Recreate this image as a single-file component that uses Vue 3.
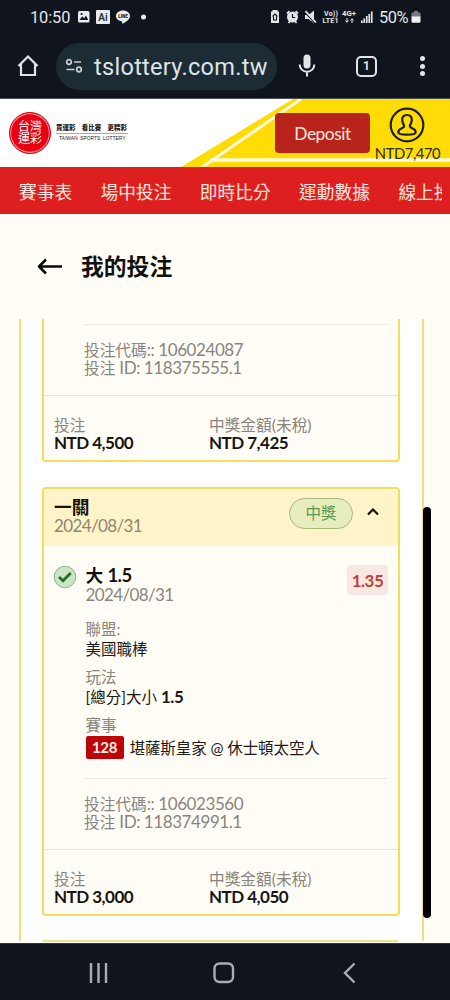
<script setup>
const tabs = ['賽事表', '場中投注', '即時比分', '運動數據', '線上投注']
const details = [
  { label: '聯盟:', value: '美國職棒' },
  { label: '玩法', value: '[總分]大小', bold: '1.5' },
]
</script>

<template>
  <div class="screen">
    <header class="status">
      <span class="clock">10:50</span>
      <svg class="notes" width="80" height="20" viewBox="0 0 80 20">
        <rect x="1" y="4" width="11.500" height="11.500" rx="1.6" fill="#e9ecef" />
        <path d="M2.500 13 5.300 9.300 7.100 11.200 9 8.600 11.200 13Z" fill="#10141c" /><circle cx="4.600" cy="7" r="1.100" fill="#10141c" />
        <rect x="19" y="3" width="14" height="14" rx="1" fill="#e9ecef" />
        <text x="26" y="13.500" text-anchor="middle" font-size="10" font-weight="700" font-family="Roboto, sans-serif" fill="#333941">Ai</text>
        <path d="M46 3.500c-4 0-7 2.400-7 5.500 0 2.800 2.500 4.900 5.700 5.300l.8 2.400c2.600-1.200 7.500-4 7.500-7.700 0-3.100-3-5.500-7-5.500Z" fill="#e9ecef" />
        <text x="46" y="10.800" text-anchor="middle" font-size="4.600" font-weight="900" font-family="Roboto, sans-serif" fill="#20242c">LINE</text>
        <circle cx="66.500" cy="10" r="2.500" fill="#e9ecef" />
      </svg>
      <svg class="signals" width="104" height="20" viewBox="0 0 104 20" fill="#e3e6e9">
        <path d="M2.500 3h5v1.500H9V16H1V4.500h1.500Z" /><path d="M2.500 9.500 5 7l2.500 2.500M3.500 9.500v3.500h3V9.500" fill="none" stroke="#10141c" stroke-width="1.100" />
        <circle cx="22.500" cy="10" r="5.500" /><path d="M17 6.500 19.500 4.200M28 6.500l-2.500-2.300M18.500 16l1.500-2M26.500 16 25 14" fill="none" stroke="#e3e6e9" stroke-width="1.700" /><path d="M22.500 7v3.500h2.700" fill="none" stroke="#10141c" stroke-width="1.200" />
        <path d="M35 8h3.500l5.500-4.500V16l-5.500-4H35Z" /><path d="M35 5.500 45.500 16.500" stroke="#10141c" stroke-width="1.200" /><path d="M35.500 4.200 46 15.500" stroke="#e3e6e9" stroke-width="1.800" />
        <g font-family="Roboto, sans-serif" font-size="7" font-weight="700">
          <text x="54" y="9.300" textLength="14">Vo))</text><text x="52.500" y="16" textLength="16">LTE1</text><text x="72" y="9.300" textLength="14" lengthAdjust="spacingAndGlyphs">4G+</text>
        </g>
        <path d="M77 11v4M75.500 13.500 77 15.300 78.500 13.500M82 16v-4M80.500 13.500 82 11.700 83.500 13.500" fill="none" stroke="#e3e6e9" />
        <path d="M91 13.500h1.700V16H91ZM93.400 11.500h1.700V16h-1.700ZM95.900 9h1.700v7h-1.700ZM98.400 7h1.700v9h-1.700ZM100.900 4.500h1.700V16h-1.700Z" />
      </svg>
      <span class="percent">50%</span>
      <svg width="10" height="14" viewBox="0 0 10 14"><path d="M3 1h4v1.500h1.300q1.200 0 1.200 1.200V7h-9V3.700q0-1.200 1.200-1.200H3Z" fill="#777b80" /><path d="M.5 6.500h9v5q0 1.300-1.200 1.300H1.700Q.5 12.800.5 11.500Z" fill="#f0f2f3" /></svg>
    </header>

    <div class="browser">
      <svg class="home" width="24" height="24" viewBox="0 0 24 24"><path d="M2.500 12 12 2.500 21.500 12M5 10v11h14V10" fill="none" stroke="#dfe3e7" stroke-width="2.200" /></svg>
      <div class="address">
        <svg width="20" height="18" viewBox="0 0 20 18" fill="none" stroke="#c8d0d5" stroke-width="1.700"><circle cx="4" cy="5" r="2.300" /><path d="M9 5h7M1.500 12.500h8" /><circle cx="14" cy="12.500" r="2.300" /></svg>
        <span>tslottery.com.tw</span>
      </div>
      <svg class="mic" width="20" height="26" viewBox="0 0 20 26"><rect x="6.500" y="1.500" width="7" height="14" rx="3.500" fill="#e1e4e8" /><path d="M2.700 11.500a7.300 7.300 0 0 0 14.600 0M10 19v4.500" fill="none" stroke="#e1e4e8" stroke-width="2" /></svg>
      <div class="tabcount">1</div>
      <div class="dots"><i /><i /><i /></div>
    </div>

    <div class="brandbar">
      <svg class="stripes" width="450" height="68" viewBox="0 0 450 68">
        <path d="M293 0H450V68H181Z" fill="#ffdc05" />
        <path d="M201 69 301 0" fill="none" stroke="#fffbdc" stroke-width="3" />
        <path d="M210 61H450" stroke="#fffbdc" stroke-width="3.500" />
      </svg>
      <div class="seal"><span>台灣</span><span>運彩</span></div>
      <div class="slogan"><b>買運彩　看比賽　更精彩</b><small>TAIWAN&nbsp; SPORTS&nbsp; LOTTERY</small></div>
      <button class="deposit">Deposit</button>
      <div class="account">
        <svg width="36" height="36" viewBox="0 0 36 36" fill="none" stroke="#211f05" stroke-width="2.200"><circle cx="18" cy="18" r="16.300" /><path d="M18 8c-3.600 0-5 2.300-4.800 5.200.2 2.600 1.100 3.600 1.800 5 .6 1.700-.5 2.500-2.600 3.300-2.400.9-3.200 2.300-3 4.200.1 1.200 1.800 2 8.600 2s8.500-.8 8.600-2c.2-1.900-.6-3.300-3-4.200-2.100-.8-3.200-1.600-2.600-3.300.7-1.400 1.600-2.400 1.800-5C23 10.300 21.600 8 18 8Z" /></svg>
        <span>NTD7,470</span>
      </div>
    </div>

    <nav class="menu"><div><span v-for="t in tabs" :key="t">{{ t }}</span></div></nav>

    <div class="title">
      <svg width="26" height="20" viewBox="0 0 26 20" fill="none" stroke="#080808" stroke-width="2.500"><path d="M25 9.500H2M9 2.500 2 9.500l7 7" stroke-linejoin="round" /></svg>
      <h1>我的投注</h1>
    </div>

    <main class="viewport">
      <div class="frame">
        <section class="card first">
          <div class="ids"><p>投注代碼<span>:: 106024087</span></p><p>投注<span> ID: 118375555.1</span></p></div>
          <footer class="totals">
            <div><p>投注</p><b>NTD 4,500</b></div>
            <div><p>中獎金額(未稅)</p><b>NTD 7,425</b></div>
          </footer>
        </section>

        <section class="card second">
          <header class="cardhead">
            <div class="round"><b>一關</b><p>2024/08/31</p></div>
            <span class="won">中獎</span>
            <svg width="14" height="10" viewBox="0 0 14 10"><path d="M2 7.500 7 2.500 12 7.500" fill="none" stroke="#161204" stroke-width="2.200" /></svg>
          </header>
          <div class="pick">
            <svg class="check" width="24" height="24" viewBox="0 0 24 24"><circle cx="12" cy="12" r="10.800" fill="#c9e5c4" stroke="#91b58d" /><path d="M6 12 10 15.800 17.700 8" fill="none" stroke="#25702b" stroke-width="2.900" /></svg>
            <div class="selection"><b>大 <span>1.5</span></b><p>2024/08/31</p></div>
            <span class="odds">1.35</span>
          </div>
          <dl class="details">
            <template v-for="d in details" :key="d.label"><dt>{{ d.label }}</dt><dd>{{ d.value }} <b v-if="d.bold">{{ d.bold }}</b></dd></template>
            <dt>賽事</dt>
            <dd class="match"><span class="code">128</span><span>堪薩斯皇家 @ 休士頓太空人</span></dd>
          </dl>
          <div class="ids"><p>投注代碼<span>:: 106023560</span></p><p>投注<span> ID: 118374991.1</span></p></div>
          <footer class="totals">
            <div><p>投注</p><b>NTD 3,000</b></div>
            <div><p>中獎金額(未稅)</p><b>NTD 4,050</b></div>
          </footer>
        </section>
        <div class="nextcard" />
      </div>
      <div class="scrollthumb" />
    </main>

    <footer class="system">
      <svg width="22" height="24" viewBox="0 0 22 24"><path d="M3 2v20M10.500 2v20M18 2v20" stroke="#a9adb1" stroke-width="2.400" /></svg>
      <svg width="24" height="24" viewBox="0 0 24 24"><rect x="2.500" y="2.500" width="18.500" height="18.500" rx="5" fill="none" stroke="#a9adb1" stroke-width="2.400" /></svg>
      <svg width="16" height="24" viewBox="0 0 16 24"><path d="M12.500 2.500 3 12l9.500 9.500" fill="none" stroke="#a9adb1" stroke-width="2.400" /></svg>
    </footer>
  </div>
</template>

<style>
body { margin: 0; background: #fffdf6; }
</style>

<style scoped>
* { box-sizing: border-box; }
p, h1, dl, dt, dd { margin: 0; }
.screen { width: 450px; height: 1000px; overflow: hidden; display: flex; flex-direction: column; background: #fffdf6; font-family: Lato, "Noto Sans CJK TC", sans-serif; font-size: 15.5px; color: #1b1a17; }
.screen > * { flex-shrink: 0; }
svg { display: block; flex: none; }
.status { height: 34px; background: #10141c; display: flex; align-items: center; padding: 0 28px 0 30px; font-family: Roboto, sans-serif; font-size: 16.4px; color: #e4e7ea; }
.clock { width: 47px; letter-spacing: -.1px; }
.signals { margin-left: 113px; }
.percent { width: 32px; margin: 0 0 0 5px; letter-spacing: -.4px; }
.browser { height: 65px; background: #10141c; display: flex; align-items: center; border-bottom: 1px solid #4e4e53; color: #dde4e8; }
.home { margin-left: 16px; }
.address { width: 221px; height: 47px; margin-left: 16px; border-radius: 24px; background: #1d2b35; display: flex; align-items: center; padding-left: 9px; font: 23.6px Roboto, sans-serif; white-space: nowrap; }
.address span { margin: 2px 0 0 9px; letter-spacing: .26px; }
.mic { margin-left: 20px; }
.tabcount { width: 21px; height: 21px; margin-left: 39px; border: 2px solid #dfe3e7; border-radius: 5px; display: grid; place-items: center; font: bold 12px Roboto, sans-serif; }
.dots { margin-left: 41px; display: grid; gap: 2.5px; padding-left: 2px; }
.dots i { width: 5px; height: 5px; border-radius: 50%; background: #e1e4e8; }
.brandbar { height: 68px; position: relative; background: #fff; display: flex; }
.brandbar > * { position: relative; }
.brandbar > .stripes { position: absolute; inset: 0; }
.seal { width: 42px; height: 42px; margin: 13px 0 0 9px; border-radius: 50%; background: #e60012; border: 1px solid #e60012; box-shadow: inset 0 0 0 1.2px #f78e93; color: #fff; display: flex; flex-direction: column; justify-content: center; align-items: center; font-size: 12px; line-height: 12px; font-weight: 400; }
.slogan { width: 72px; margin: 25px 0 0 5px; height: 21px; white-space: nowrap; color: #222; display: flex; flex-direction: column; }
.slogan b { height: 10px; border-bottom: 1px solid #aaa; font-size: 6.45px; line-height: 7px; font-weight: 900; }
.slogan small { font: 4.9px/9px "Liberation Sans", sans-serif; padding-left: 3px; }
.deposit { width: 95px; height: 40px; margin: 14px 0 0 147px; padding: 0; border: 0; border-radius: 4px; background: #b8241c; color: #ffe9df; font: 17.3px Lato, sans-serif; letter-spacing: -.45px; }
.account { margin: 8px 0 0 5px; display: flex; flex-direction: column; align-items: center; width: 65px; color: #302b05; font-size: 14.8px; line-height: 18px; letter-spacing: -.45px; white-space: nowrap; }
.account svg { margin-left: -1px; }
.account span { margin-top: 1px; }
.menu { height: 47px; background: #dd201f; padding: 0 8px 0 19px; font-size: 17.7px; line-height: 51px; color: #ffe7df; }
.menu div { display: flex; gap: 28.5px; overflow: hidden; white-space: nowrap; height: 47px; }
.title { height: 105px; display: flex; align-items: center; padding-left: 37px; }
.title h1 { margin: -2px 0 0 18px; font-size: 22.8px; line-height: 30px; font-weight: 700; color: #111; }
.viewport { height: 624px; position: relative; overflow: hidden; padding: 0 26px 0 19px; }
.frame { height: 622px; background: #fff; border: solid #f0e078; border-width: 0 2px; padding: 0 21px; }
.card { background: #fffdf6; border: 2px solid #f0de5c; border-radius: 4px; width: 358px; }
.first { height: 143px; border-top: 0; border-radius: 0 0 4px 4px; padding-top: 5px; }
.second { height: 429px; margin-top: 25px; }
.nextcard { height: 2px; margin-top: 24px; width: 357px; background: #f0e488; border-radius: 3px 3px 0 0; }
.ids { height: 71px; margin: 0 11px 0 40px; border-top: 1px solid #e9e8e0; padding-top: 16px; font-size: 15.7px; line-height: 18px; color: #89857e; }
.ids span { font-size: 17px; letter-spacing: -.43px; }
.totals { height: 64px; border-top: 1px solid #e5e3da; display: flex; padding: 21px 10px 0; line-height: 17px; white-space: nowrap; }
.totals div { width: 155px; }
.totals p { color: #89857e; font-size: 15.7px; }
.totals b { display: block; font-size: 17px; line-height: 17px; letter-spacing: -.52px; color: #171614; }
.cardhead { height: 57px; background: #fff3ca; display: flex; padding: 9px 18px 0 10px; }
.round { width: 235px; }
.round b { display: block; font-size: 17.7px; line-height: 19px; color: #161108; }
.round p, .selection p { color: #89857e; font-size: 17px; letter-spacing: -.62px; line-height: 18px; }
.round p { color: #90866f; }
.won { width: 64px; height: 31px; border: 1px solid #a6b87e; border-radius: 16px; background: #e7edbc; color: #5a9755; display: grid; place-items: center; line-height: 27px; }
.cardhead svg { margin: 9px 0 0 13px; }
.pick { display: flex; height: 72px; padding: 19px 10px 0 9px; }
.selection { margin-left: 8.5px; flex: 1; }
.selection b { display: block; font-size: 17.6px; line-height: 20px; color: #11100e; }
.selection b span { font-size: 18.5px; letter-spacing: -.5px; }
.odds { width: 41px; height: 30px; border-radius: 4px; background: #f9e8e1; color: #bb4340; display: grid; place-items: center; font-size: 17px; letter-spacing: -.5px; font-weight: 700; }
.details { height: 160px; padding: 2px 0 0 41.5px; }
.details dt { color: #89857e; line-height: 18px; height: 18px; }
.details dd { line-height: 22px; height: 20px; margin-bottom: 10px; }
.details dd b { font-size: 16.8px; letter-spacing: -.4px; }
.details .match { display: flex; height: 24px; line-height: 24px; align-items: center; white-space: nowrap; }
.match span:last-child { padding-top: 3px; letter-spacing: -.08px; }
.code { width: 38px; height: 23px; margin: 2px 6px 0 0; border-radius: 2px; background: #bd0509; color: #fff0e8; text-align: center; font-size: 15px; letter-spacing: -.3px; font-weight: 700; line-height: 23px; }
.scrollthumb { position: absolute; left: 423px; top: 188px; width: 8px; height: 411px; background: #000; border-radius: 4px; }
.system { height: 57px; background: #10141c; border-top: 1px solid #303538; display: flex; align-items: center; padding: 2px 0 0 88px; }
.system svg:nth-child(2) { margin-left: 102px; }
.system svg:nth-child(3) { margin-left: 106px; }
</style>
